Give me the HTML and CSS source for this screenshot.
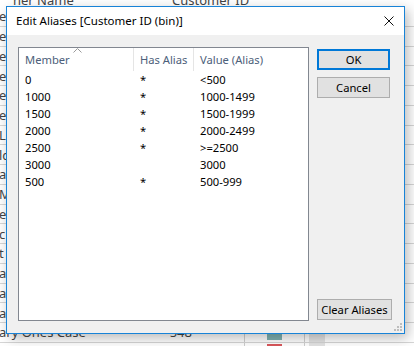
FILE: index.html
```html
<!DOCTYPE html>
<html lang="en">
<head>
    <meta charset="UTF-8">
    <meta name="viewport" content="width=device-width, initial-scale=1.0">
    <title>Edit Aliases</title>
    <link rel="stylesheet" href="styles.css">
</head>
<body>

<!-- worksheet behind the dialog -->
<div class="sheet">
    <div class="sheet-head">
        <span class="h-name">ner Name</span>
        <span class="h-id">Customer ID</span>
    </div>
    <div class="sheet-row"><span class="c-name">e</span></div>
    <div class="sheet-row"><span class="c-name">e</span></div>
    <div class="sheet-row"><span class="c-name">e</span></div>
    <div class="sheet-row"><span class="c-name">e</span></div>
    <div class="sheet-row"><span class="c-name">e</span></div>
    <div class="sheet-row"><span class="c-name">e S</span></div>
    <div class="sheet-row"><span class="c-name">Lb</span></div>
    <div class="sheet-row"><span class="c-name">lc</span></div>
    <div class="sheet-row"><span class="c-name">a</span></div>
    <div class="sheet-row"><span class="c-name">Ma</span></div>
    <div class="sheet-row"><span class="c-name">e</span></div>
    <div class="sheet-row"><span class="c-name">c</span></div>
    <div class="sheet-row"><span class="c-name">t</span></div>
    <div class="sheet-row"><span class="c-name">a</span></div>
    <div class="sheet-row"><span class="c-name">a</span></div>
    <div class="sheet-row"><span class="c-name">a</span></div>
    <div class="sheet-row">
        <span class="c-name">ary Ones Case</span>
        <span class="c-num">548</span>
        <span class="c-gap"></span>
        <span class="c-bar"><span class="bar teal"></span></span>
        <span class="c-space"></span>
        <span class="c-scroll"></span>
    </div>
    <div class="sheet-row">
        <span class="c-name"></span>
        <span class="c-num"></span>
        <span class="c-gap"></span>
        <span class="c-bar"><span class="bar red"></span></span>
        <span class="c-space"></span>
        <span class="c-scroll"></span>
    </div>
</div>

<div class="dialog">
    <div class="titlebar">
        <span class="title">Edit Aliases [Customer ID (bin)]</span>
        <span class="close">
            <svg width="10" height="10" viewBox="0 0 10 10">
                <path d="M0.5 0.5 L9.5 9.5 M9.5 0.5 L0.5 9.5" stroke="#111" stroke-width="1" fill="none"/>
            </svg>
        </span>
    </div>
    <div class="dlg-body">
        <div class="list">
            <div class="list-head">
                <div class="col col-member">Member
                    <svg class="sort" width="9" height="5" viewBox="0 0 9 5">
                        <path d="M0.5 4.5 L4.5 0.5 L8.5 4.5" stroke="#9a9a9a" stroke-width="1" fill="none"/>
                    </svg>
                </div>
                <div class="col col-has">Has Alias</div>
                <div class="col col-value">Value (Alias)</div>
            </div>
            <div class="list-row"><div class="col col-member">0</div><div class="col col-has">*</div><div class="col col-value">&lt;500</div></div>
            <div class="list-row"><div class="col col-member">1000</div><div class="col col-has">*</div><div class="col col-value">1000-1499</div></div>
            <div class="list-row"><div class="col col-member">1500</div><div class="col col-has">*</div><div class="col col-value">1500-1999</div></div>
            <div class="list-row"><div class="col col-member">2000</div><div class="col col-has">*</div><div class="col col-value">2000-2499</div></div>
            <div class="list-row"><div class="col col-member">2500</div><div class="col col-has">*</div><div class="col col-value">&gt;=2500</div></div>
            <div class="list-row"><div class="col col-member">3000</div><div class="col col-has"></div><div class="col col-value">3000</div></div>
            <div class="list-row"><div class="col col-member">500</div><div class="col col-has">*</div><div class="col col-value">500-999</div></div>
        </div>
        <div class="side">
            <button class="btn btn-default">OK</button>
            <button class="btn">Cancel</button>
            <button class="btn btn-clear">Clear Aliases</button>
        </div>
        <svg class="grip" width="8" height="8" viewBox="0 0 8 8">
            <rect x="6" y="0" width="2" height="2" fill="#bdbdbd"/>
            <rect x="3" y="3" width="2" height="2" fill="#bdbdbd"/>
            <rect x="6" y="3" width="2" height="2" fill="#bdbdbd"/>
            <rect x="0" y="6" width="2" height="2" fill="#bdbdbd"/>
            <rect x="3" y="6" width="2" height="2" fill="#bdbdbd"/>
            <rect x="6" y="6" width="2" height="2" fill="#bdbdbd"/>
        </svg>
    </div>
</div>

</body>
</html>
```

FILE: styles.css
```css
/* page */
body {
    margin: 0;
    width: 414px;
    height: 346px;
    overflow: hidden;
    position: relative;
    background-color: #fff;
    font-family: "Noto Sans", sans-serif;
}

/* worksheet in the background */
.sheet {
    font-size: 13px;
    color: #444;
}
.sheet-head {
    height: 7px;
    overflow: hidden;
    display: flex;
}
.sheet-head span {
    line-height: 16px;
    margin-top: -8px;
    white-space: nowrap;
}
.h-name {
    margin-left: 13px;
    width: 159px;
}
.sheet-row {
    box-sizing: border-box;
    height: 19.75px;
    border-bottom: 1px solid #d6d6d6;
    display: flex;
    align-items: center;
    white-space: nowrap;
}
.c-name {
    width: 159px;
    margin-left: -1px;
    overflow: hidden;
}
.c-num {
    width: 34px;
    text-align: right;
}
.c-gap {
    width: 52px;
}
.c-bar {
    box-sizing: border-box;
    width: 61px;
    height: 100%;
    border-left: 1px solid #cfcfcf;
    border-right: 1px solid #cfcfcf;
    padding-left: 22px;
    display: flex;
}
.bar {
    width: 15px;
}
.teal {
    background-color: #7fb2b2;
    margin-bottom: 2px;
}
.red {
    background-color: #d9575b;
    margin-top: 1px;
}
.c-space {
    width: 4px;
}
.c-scroll {
    width: 16px;
    height: 100%;
    background-color: #e4e4e4;
}

/* dialog */
.dialog {
    position: absolute;
    left: 6px;
    top: 6px;
    width: 399px;
    height: 328px;
    box-sizing: border-box;
    border: 1px solid #1883d7;
    background-color: #f0f0f0;
    box-shadow: 3px 4px 12px rgba(0, 0, 0, 0.28);
    display: flex;
    flex-direction: column;
    font-size: 11.2px;
    color: #000;
}
.titlebar {
    height: 28px;
    flex-shrink: 0;
    background-color: #fff;
    display: flex;
    align-items: center;
    justify-content: space-between;
}
.title {
    padding-left: 9px;
    line-height: 28px;
    font-size: 11.5px;
}
.close {
    width: 30px;
    height: 28px;
    display: flex;
    align-items: center;
    justify-content: center;
}
.dlg-body {
    flex: 1;
    position: relative;
    display: flex;
    gap: 8px;
    padding: 12px 12px 12px 11px;
}

/* list view */
.list {
    width: 291px;
    box-sizing: border-box;
    border: 1px solid #828790;
    background-color: #fff;
}
.list-head {
    display: flex;
    height: 23px;
    align-items: center;
    color: #4c607a;
}
.list-head .col {
    height: 100%;
    display: flex;
    align-items: center;
    position: relative;
}
.list-head .col-member,
.list-head .col-has {
    border-right: 1px solid #e5e5e5;
}
.sort {
    position: absolute;
    left: 54px;
    top: 0;
}
.list-row {
    display: flex;
    height: 17px;
    align-items: center;
}
.col {
    box-sizing: border-box;
    padding-left: 6px;
    white-space: nowrap;
}
.col-member {
    width: 115px;
}
.col-has {
    width: 60px;
}
.col-value {
    flex: 1;
}

/* buttons */
.side {
    width: 75px;
    display: flex;
    flex-direction: column;
    gap: 7px;
    padding: 2px 0 1px;
}
.btn {
    width: 73px;
    height: 21px;
    box-sizing: border-box;
    border: 1px solid #adadad;
    background-color: #e1e1e1;
    font-family: "Noto Sans", sans-serif;
    font-size: 11.2px;
    color: #000;
    padding: 0;
}
.btn-default {
    border: 2px solid #0078d7;
}
.btn-clear {
    width: 75px;
    margin-top: auto;
}
.grip {
    position: absolute;
    right: 2px;
    bottom: 2px;
}
```
